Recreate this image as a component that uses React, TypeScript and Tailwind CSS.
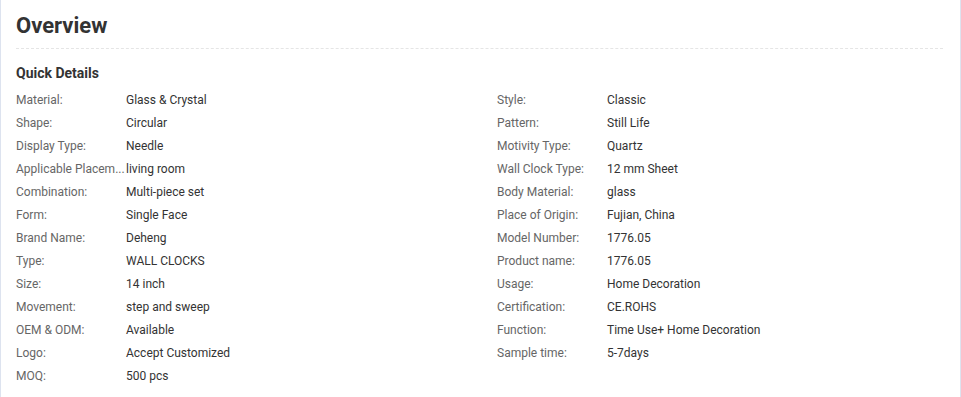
import React from "react";

const left: [string, string][] = [
  ["Material:", "Glass & Crystal"],
  ["Shape:", "Circular"],
  ["Display Type:", "Needle"],
  ["Applicable Placem...", "living room"],
  ["Combination:", "Multi-piece set"],
  ["Form:", "Single Face"],
  ["Brand Name:", "Deheng"],
  ["Type:", "WALL CLOCKS"],
  ["Size:", "14 inch"],
  ["Movement:", "step and sweep"],
  ["OEM & ODM:", "Available"],
  ["Logo:", "Accept Customized"],
  ["MOQ:", "500 pcs"],
];

const right: [string, string][] = [
  ["Style:", "Classic"],
  ["Pattern:", "Still Life"],
  ["Motivity Type:", "Quartz"],
  ["Wall Clock Type:", "12 mm Sheet"],
  ["Body Material:", "glass"],
  ["Place of Origin:", "Fujian, China"],
  ["Model Number:", "1776.05"],
  ["Product name:", "1776.05"],
  ["Usage:", "Home Decoration"],
  ["Certification:", "CE.ROHS"],
  ["Function:", "Time Use+ Home Decoration"],
  ["Sample time:", "5-7days"],
];

function Col({ rows, w }: { rows: [string, string][]; w: string }) {
  return (
    <div className={`flex flex-col ${w}`}>
      {rows.map(([k, v]) => (
        <div key={k} className="flex h-[23px] items-center text-[12px]">
          <div className="w-[110px] shrink-0 whitespace-nowrap text-[#666]">{k}</div>
          <div className="text-[#333]">{v}</div>
        </div>
      ))}
    </div>
  );
}

export default function App() {
  return (
    <div
      className="h-[397px] w-[961px] overflow-hidden border-x border-[#dde3ef] bg-white"
      style={{ fontFamily: "Roboto, 'Liberation Sans', sans-serif" }}
    >
      <div className="px-[15px]">
        <div className="h-[49px] border-b border-dashed border-[#e5e5e5] pt-[10px] mr-[2px]">
          <h1 className="text-[22px] font-bold leading-[32px] text-[#333]">Overview</h1>
        </div>
        <h2 className="mt-[15px] text-[14px] font-bold leading-[18px] text-[#333]">Quick Details</h2>
        <div className="mt-[6px] flex">
          <Col rows={left} w="w-[481px]" />
          <Col rows={right} w="flex-1" />
        </div>
      </div>
    </div>
  );
}
